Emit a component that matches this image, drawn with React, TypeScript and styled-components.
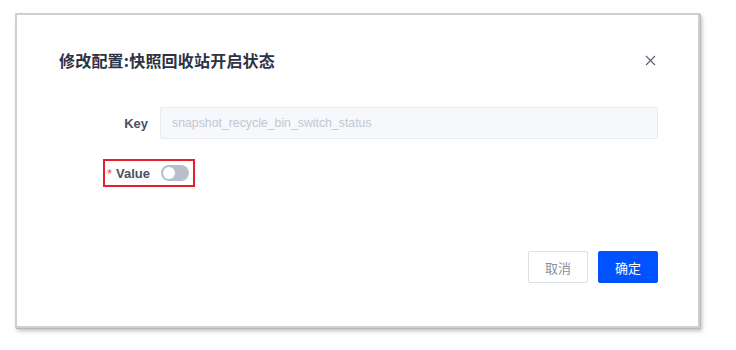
import React from 'react';
import styled, { createGlobalStyle } from 'styled-components';

const GlobalStyle = createGlobalStyle`
  html, body {
    margin: 0;
    padding: 0;
    background: #ffffff;
    font-family: "Liberation Sans", "Noto Sans CJK SC", Arial, sans-serif;
  }
`;

export default function App() {
  return (
    <>
      <GlobalStyle />
      <Page>
        <Dialog>
          <Header>
            <Title>修改配置:快照回收站开启状态</Title>
            <CloseButton aria-label="close">
              <svg width="11" height="11" viewBox="0 0 11 11">
                <path d="M1 1L10 10M10 1L1 10" stroke="#5c6373" strokeWidth="1.2" fill="none" />
              </svg>
            </CloseButton>
          </Header>

          <Form>
            <Row>
              <Label>Key</Label>
              <Input disabled placeholder="snapshot_recycle_bin_switch_status" />
            </Row>
            <Row>
              <Label shift={2}><Required>*</Required>Value</Label>
              <Switch aria-label="value" />
              <Highlight />
            </Row>
          </Form>

          <Footer>
            <Button>取消</Button>
            <Button primary>确定</Button>
          </Footer>
        </Dialog>
      </Page>
    </>
  );
}

const Page = styled.div`
  width: 736px;
  height: 350px;
  padding: 13px 0 0 15px;
  box-sizing: border-box;
`;

const Dialog = styled.div`
  width: 685px;
  height: 315px;
  box-sizing: border-box;
  background: #fff;
  border: 2px solid #cfcfcf;
  box-shadow: 1px 1px 0 #b9b9b9, 2px 3px 4px rgba(0, 0, 0, 0.25);
  padding: 0 40px 0 42px;
  display: flex;
  flex-direction: column;
`;

const Header = styled.div`
  display: flex;
  align-items: center;
  justify-content: space-between;
  height: 28px;
  margin-top: 31px;
`;

const Title = styled.h1`
  margin: 0;
  font-size: 16px;
  font-weight: 700;
  color: #2b3345;
  font-family: "Noto Sans CJK SC", sans-serif;
  letter-spacing: 0.2px;
`;

const CloseButton = styled.button`
  border: none;
  background: none;
  padding: 0;
  margin-right: 2px;
  width: 11px;
  height: 11px;
  display: flex;
`;

const Form = styled.div`
  display: flex;
  flex-direction: column;
  gap: 18px;
  margin-top: 33px;
`;

const Row = styled.div`
  position: relative;
  display: flex;
  align-items: center;
  gap: 12px;
  height: 32px;
`;

const Label = styled.label<{ shift?: number }>`
  width: ${({ shift = 0 }) => 89 + shift}px;
  flex: none;
  text-align: right;
  font-size: 13px;
  font-weight: 700;
  color: #4a5161;
  margin-right: ${({ shift = 0 }) => -shift}px;
`;

const Required = styled.span`
  color: #f0474f;
  font-weight: 400;
  margin-right: 4px;
`;

const Input = styled.input`
  flex: 1;
  height: 32px;
  box-sizing: border-box;
  border: 1px solid #e8ebf0;
  border-radius: 2px;
  background: #f6f8fb;
  padding: 0 11px;
  font-size: 12.3px;
  font-family: "Liberation Sans", Arial, sans-serif;
  outline: none;

  &::placeholder {
    color: #c3c7cf;
  }
`;

const Switch = styled.button`
  position: relative;
  width: 28px;
  height: 16px;
  border: none;
  border-radius: 8px;
  background: #b8bfcc;
  padding: 0;
  margin-left: 1px;

  &::after {
    content: '';
    position: absolute;
    left: 2px;
    top: 2px;
    width: 12px;
    height: 12px;
    border-radius: 50%;
    background: #fff;
  }
`;

const Highlight = styled.span`
  position: absolute;
  left: 44px;
  top: 2px;
  width: 92px;
  height: 28px;
  box-sizing: border-box;
  border: 2px solid #e3202c;
  pointer-events: none;
`;

const Footer = styled.div`
  display: flex;
  justify-content: flex-end;
  gap: 10px;
  margin-top: 62px;
`;

const Button = styled.button<{ primary?: boolean }>`
  width: 60px;
  height: 32px;
  border-radius: 2px;
  font-size: 13px;
  font-family: "Noto Sans CJK SC", sans-serif;
  border: 1px solid ${({ primary }) => (primary ? '#0052ff' : '#dcdfe6')};
  background: ${({ primary }) => (primary ? '#0052ff' : '#fff')};
  color: ${({ primary }) => (primary ? '#fff' : '#8a909b')};
`;
